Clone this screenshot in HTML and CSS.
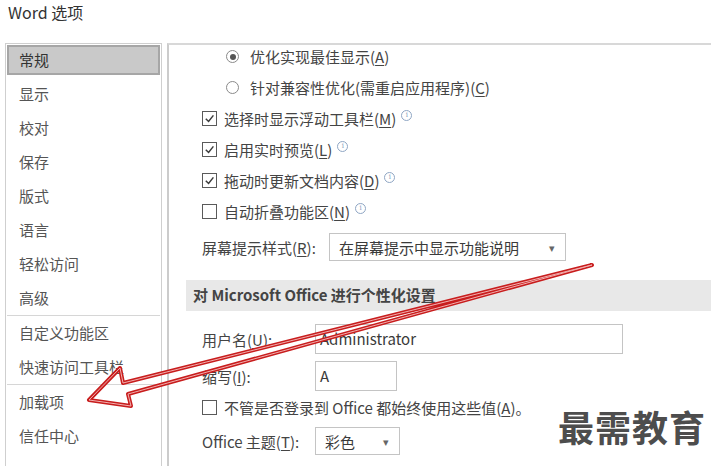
FILE: index.html
```html
<!DOCTYPE html>
<html lang="zh-CN">
<head>
    <meta charset="UTF-8">
    <title>Word 选项</title>
    <link rel="stylesheet" href="styles.css">
</head>
<body>
    <!-- Dialog title -->
    <div class="dialog-title">Word 选项</div>

    <div class="dialog-body">
        <!-- Left navigation -->
        <div class="nav">
            <div class="nav-item selected">常规</div>
            <div class="nav-item">显示</div>
            <div class="nav-item">校对</div>
            <div class="nav-item">保存</div>
            <div class="nav-item">版式</div>
            <div class="nav-item">语言</div>
            <div class="nav-item">轻松访问</div>
            <div class="nav-item">高级</div>
            <div class="nav-sep"></div>
            <div class="nav-item">自定义功能区</div>
            <div class="nav-item">快速访问工具栏</div>
            <div class="nav-sep"></div>
            <div class="nav-item">加载项</div>
            <div class="nav-item">信任中心</div>
        </div>

        <!-- Settings panel -->
        <div class="panel">
            <div class="row radio-row first-row">
                <span class="radio checked"></span>
                <span>优化实现最佳显示(<u>A</u>)</span>
            </div>
            <div class="row radio-row">
                <span class="radio"></span>
                <span>针对兼容性优化(需重启应用程序)(<u>C</u>)</span>
            </div>
            <div class="row">
                <span class="checkbox"><svg viewBox="0 0 14 14"><path d="M3 7.2 L6 10.2 L11.2 3.6" /></svg></span>
                <span>选择时显示浮动工具栏(<u>M</u>)</span>
                <span class="info">i</span>
            </div>
            <div class="row">
                <span class="checkbox"><svg viewBox="0 0 14 14"><path d="M3 7.2 L6 10.2 L11.2 3.6" /></svg></span>
                <span>启用实时预览(<u>L</u>)</span>
                <span class="info">i</span>
            </div>
            <div class="row">
                <span class="checkbox"><svg viewBox="0 0 14 14"><path d="M3 7.2 L6 10.2 L11.2 3.6" /></svg></span>
                <span>拖动时更新文档内容(<u>D</u>)</span>
                <span class="info">i</span>
            </div>
            <div class="row">
                <span class="checkbox"></span>
                <span>自动折叠功能区(<u>N</u>)</span>
                <span class="info">i</span>
            </div>
            <div class="row field-row tip-row">
                <span class="tip-label">屏幕提示样式(<u>R</u>):</span>
                <div class="select tip-select">
                    <span>在屏幕提示中显示功能说明</span>
                    <span class="caret">&#9662;</span>
                </div>
            </div>

            <div class="section-head">对 Microsoft Office 进行个性化设置</div>

            <div class="field-row user-row">
                <span class="field-label">用户名(<u>U</u>):</span>
                <div class="input user-input">Administrator</div>
            </div>
            <div class="field-row initials-row">
                <span class="field-label">缩写(<u>I</u>):</span>
                <div class="input initials-input">A</div>
            </div>
            <div class="row always-row">
                <span class="checkbox"></span>
                <span>不管是否登录到 Office 都始终使用这些值(<u>A</u>)。</span>
            </div>
            <div class="field-row theme-row">
                <span class="field-label">Office 主题(<u>T</u>):</span>
                <div class="select theme-select">
                    <span>彩色</span>
                    <span class="caret">&#9662;</span>
                </div>
            </div>
        </div>
    </div>

    <!-- Red annotation arrow -->
    <svg class="arrow" viewBox="0 0 711 466" width="711" height="466">
        <polygon points="592,265 123,383 120,368 89,400 131,406 128,394" />
        <polygon class="arrow-inner" points="592,265 123,383 120,368 89,400 131,406 128,394" />
    </svg>

    <!-- Watermark -->
    <div class="watermark">最需教育</div>
</body>
</html>
```

FILE: styles.css
```css
/* Word options dialog */
body {
    margin: 0;
    width: 711px;
    height: 466px;
    overflow: hidden;
    position: relative;
    background-color: #ffffff;
    font-family: "Noto Sans CJK SC", "Noto Sans", sans-serif;
    font-size: 15px;
    color: #444444;
}

u {
    text-underline-offset: 2px;
}

.dialog-title {
    height: 43px;
    padding-left: 8px;
    line-height: 24px;
    font-size: 16px;
    color: #333333;
}

.dialog-body {
    display: flex;
    gap: 5px;
    padding-left: 5px;
}

/* Left navigation */
.nav {
    width: 155px;
    height: 440px;
    border: 1px solid #cfcfcf;
    border-bottom: none;
    flex-shrink: 0;
}

.nav-item {
    height: 28px;
    line-height: 28px;
    margin: 4px 1px;
    padding-left: 11px;
    border: 1px solid transparent;
    color: #555555;
}

.nav-item:first-child {
    margin-top: 1px;
}

.nav-item.selected {
    background-color: #c9c9c9;
    border: 2px solid #a6a6a6;
    height: 26px;
    line-height: 26px;
    padding-left: 10px;
    color: #333333;
}

.nav-sep {
    height: 1px;
    margin: -2px 1px;
    background-color: #d6d6d6;
}

/* Right panel */
.panel {
    flex: 1;
    height: 440px;
    border-top: 2px solid #d8d8d8;
    border-left: 2px solid #cccccc;
    padding-left: 33px;
}

.row {
    display: flex;
    align-items: center;
    height: 31px;
}

.first-row {
    margin-top: -4px;
}

.radio-row {
    padding-left: 24px;
}

.radio {
    width: 11px;
    height: 11px;
    border: 1px solid #8a8a8a;
    border-radius: 50%;
    margin-right: 11px;
    display: flex;
    align-items: center;
    justify-content: center;
}

.radio.checked::after {
    content: '';
    width: 6px;
    height: 6px;
    border-radius: 50%;
    background-color: #555555;
}

.checkbox {
    width: 13px;
    height: 13px;
    border: 1px solid #5a5a5a;
    margin-right: 7px;
    flex-shrink: 0;
}

.checkbox svg {
    width: 13px;
    height: 13px;
    display: block;
    fill: none;
    stroke: #3a3a3a;
    stroke-width: 1.6;
}

.info {
    width: 9px;
    height: 9px;
    border: 1px solid #8fa6c4;
    border-radius: 50%;
    margin-left: 5px;
    margin-top: -6px;
    font-size: 7px;
    line-height: 9px;
    text-align: center;
    color: #7f97b8;
    font-family: "DejaVu Serif", serif;
}

.field-row {
    display: flex;
    align-items: center;
}

.tip-row {
    height: 40px;
}

.tip-label {
    width: 127px;
}

.select {
    display: flex;
    align-items: center;
    justify-content: space-between;
    height: 26px;
    border: 1px solid #c4c4c4;
    padding: 0 10px 0 9px;
    color: #3a3a3a;
}

.tip-select {
    width: 216px;
}

.caret {
    font-size: 11px;
    color: #666666;
}

.section-head {
    margin: 13px 0 0 -16px;
    height: 31px;
    line-height: 30px;
    padding-left: 7px;
    background-color: #e8e8e8;
    font-weight: bold;
    color: #444444;
}

.field-label {
    width: 113px;
}

.input {
    height: 28px;
    line-height: 28px;
    border: 1px solid #c4c4c4;
    padding-left: 4px;
    color: #3a3a3a;
}

.user-row {
    margin-top: 13px;
}

.user-input {
    width: 302px;
}

.initials-row {
    margin-top: 7px;
}

.initials-input {
    width: 76px;
}

.always-row {
    height: 33px;
}

.theme-row {
    margin-top: 3px;
}

.theme-select {
    width: 64px;
}

/* Annotation overlay */
.arrow {
    position: absolute;
    left: 0;
    top: 0;
    pointer-events: none;
}

.arrow polygon {
    fill: none;
    stroke: #c81d1d;
    stroke-width: 4;
    stroke-linejoin: round;
}

.arrow .arrow-inner {
    stroke: #f2b0b0;
    stroke-width: 1;
}

.watermark {
    position: absolute;
    left: 558px;
    top: 400px;
    font-size: 36px;
    font-weight: bold;
    color: #4d4d4d;
    letter-spacing: 1px;
}
```
